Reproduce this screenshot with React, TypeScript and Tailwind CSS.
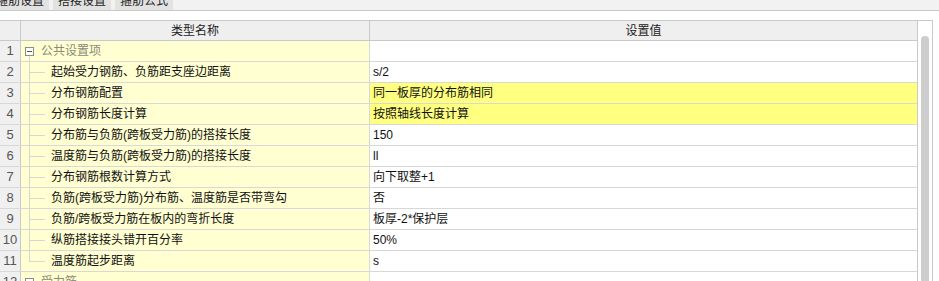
import React from "react";

type Row = { n: number; name: string; value: string; group?: boolean; hl?: boolean };

const rows: Row[] = [
  { n: 1, name: "公共设置项", value: "", group: true },
  { n: 2, name: "起始受力钢筋、负筋距支座边距离", value: "s/2" },
  { n: 3, name: "分布钢筋配置", value: "同一板厚的分布筋相同", hl: true },
  { n: 4, name: "分布钢筋长度计算", value: "按照轴线长度计算", hl: true },
  { n: 5, name: "分布筋与负筋(跨板受力筋)的搭接长度", value: "150" },
  { n: 6, name: "温度筋与负筋(跨板受力筋)的搭接长度", value: "ll" },
  { n: 7, name: "分布钢筋根数计算方式", value: "向下取整+1" },
  { n: 8, name: "负筋(跨板受力筋)分布筋、温度筋是否带弯勾", value: "否" },
  { n: 9, name: "负筋/跨板受力筋在板内的弯折长度", value: "板厚-2*保护层" },
  { n: 10, name: "纵筋搭接接头错开百分率", value: "50%" },
  { n: 11, name: "温度筋起步距离", value: "s" },
  { n: 12, name: "受力筋", value: "", group: true },
];

const font = { fontFamily: '"Liberation Sans", "Noto Sans CJK SC", sans-serif' };

function NameCell({ r }: { r: Row }) {
  if (r.group) {
    return (
      <div className="relative flex h-full items-center bg-[#ffffd2]">
        <div className="ml-[4px] flex h-[9px] w-[9px] items-center justify-center border border-[#8c8c8c] bg-white">
          <div className="h-px w-[5px] bg-[#555]" />
        </div>
        <span className="ml-[7px] text-[12px] text-[#8a8a7a]">{r.name}</span>
        {r.n === 1 && <div className="absolute left-[8px] top-[15px] h-[6px] w-px bg-[#d6d6d6]" />}
      </div>
    );
  }
  const last = r.n === 11;
  return (
    <div className="relative flex h-full items-center bg-[#ffffd2]">
      <div className={`absolute left-[8px] top-0 w-px bg-[#d6d6d6] ${last ? "h-[10px]" : "h-[21px]"}`} />
      <div className="absolute left-[8px] top-[10px] h-px w-[16px] bg-[#d6d6d6]" />
      <span className="ml-[30px] text-[12px] text-[#111]">{r.name}</span>
    </div>
  );
}

export default function App() {
  return (
    <div className="relative h-[281px] w-[939px] overflow-hidden bg-white" style={font}>
      {/* tab strip */}
      <div className="h-[11px] overflow-hidden border-b border-[#c9c9c9] bg-[#f2f2f2]">
        <div className="-mt-[8px] flex gap-[4px] text-[12px] leading-[16px] text-[#222]">
          <div className="-ml-[9px] bg-[#e2e2e2] px-[5px] py-[1px]">箍筋设置</div>
          <div className="bg-[#e2e2e2] px-[5px] py-[1px]">搭接设置</div>
          <div className="bg-[#e2e2e2] px-[5px] py-[1px]">箍筋公式</div>
        </div>
      </div>
      <div className="h-[9px]" />
      {/* grid */}
      <div className="flex w-[933px] border-t border-r border-[#c9c9c9]">
        <div className="w-[917px]">
          <div className="flex h-[20px] border-b border-[#c9c9c9] bg-[#efefef] text-[12px] text-[#222]">
            <div className="w-[21px] border-r border-[#c9c9c9]" />
            <div className="flex w-[349px] items-center justify-center border-r border-[#c9c9c9]">类型名称</div>
            <div className="flex flex-1 items-center justify-center">设置值</div>
          </div>
          {rows.map((r) => (
            <div key={r.n} className="flex h-[21px] border-b border-[#d8d8d8]">
              <div className="flex w-[21px] items-center justify-center border-r border-[#c9c9c9] bg-[#f0f0f0] text-[13px] text-[#555]">
                {r.n}
              </div>
              <div className="w-[349px] border-r border-[#d8d8d8]">
                <NameCell r={r} />
              </div>
              <div
                className={`flex flex-1 items-center pl-[3px] text-[12px] text-[#111] ${
                  r.hl ? "bg-[#ffff80]" : "bg-white"
                }`}
              >
                {r.value}
              </div>
            </div>
          ))}
        </div>
        <div className="flex w-[15px] justify-center border-l border-[#c9c9c9] bg-white pt-[15px]">
          <div className="h-[300px] w-[8px] rounded-full bg-[#cdcdcd]" />
        </div>
      </div>
    </div>
  );
}
